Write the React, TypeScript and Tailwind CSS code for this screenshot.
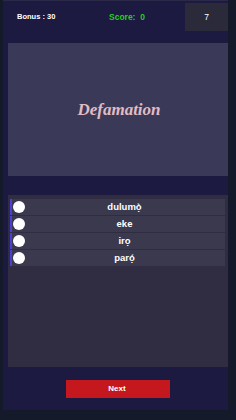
export default function App() {
  const options = ['dulumọ̀', 'eke', 'irọ', 'parọ́'];

  return (
    <div className="w-[236px] h-[420px] bg-[#151a2a] pl-[3px] pr-[8px] pb-[10px] font-['Liberation_Sans',Arial,sans-serif]">
      <div className="h-full bg-[#1c1a40] flex flex-col border-t border-[#2a2a48]">
        <div className="h-[42px] flex items-start">
          <div className="h-[28px] mt-[2px] flex items-center pl-[14px] w-[106px]">
            <span className="text-[7.5px] font-bold text-white">Bonus : 30</span>
          </div>
          <div className="h-[28px] mt-[2px] flex items-center w-[70px]">
            <span className="text-[8.5px] font-bold text-[#25cc25]">Score:&nbsp; 0</span>
          </div>
          <div className="ml-auto w-[43px] h-[28px] mt-[2px] bg-[#2b2a3a] flex items-center justify-center">
            <span className="text-[8.5px] text-white">7</span>
          </div>
        </div>

        <div className="ml-[5px] h-[133px] bg-[#3a3a58] flex items-center justify-center">
          <span className="text-[17px] font-bold italic text-[#e2bcc4] font-['Liberation_Serif',serif] pl-[2px]">
            Defamation
          </span>
        </div>

        <div className="h-[19px]" />

        <div className="ml-[5px] h-[172px] bg-[#302d42] pt-[4px] pl-[2px] pr-[3px] flex flex-col gap-[1px]">
          {options.map((o) => (
            <div key={o} className="h-[16px] bg-[#3b394e] border-l-2 border-[#4a3fd0] flex items-center">
              <div className="w-[12px] h-[12px] rounded-full bg-white ml-[1px]" />
              <span className="flex-1 text-center text-[9.5px] font-bold text-white pr-[1px]">{o}</span>
            </div>
          ))}
        </div>

        <div className="flex-1 flex items-start justify-center pt-[13px] pl-[5px]">
          <button className="w-[104px] h-[18px] bg-[#c4181e] text-white text-[8px] font-bold pr-[2px]">Next</button>
        </div>
      </div>
    </div>
  );
}
